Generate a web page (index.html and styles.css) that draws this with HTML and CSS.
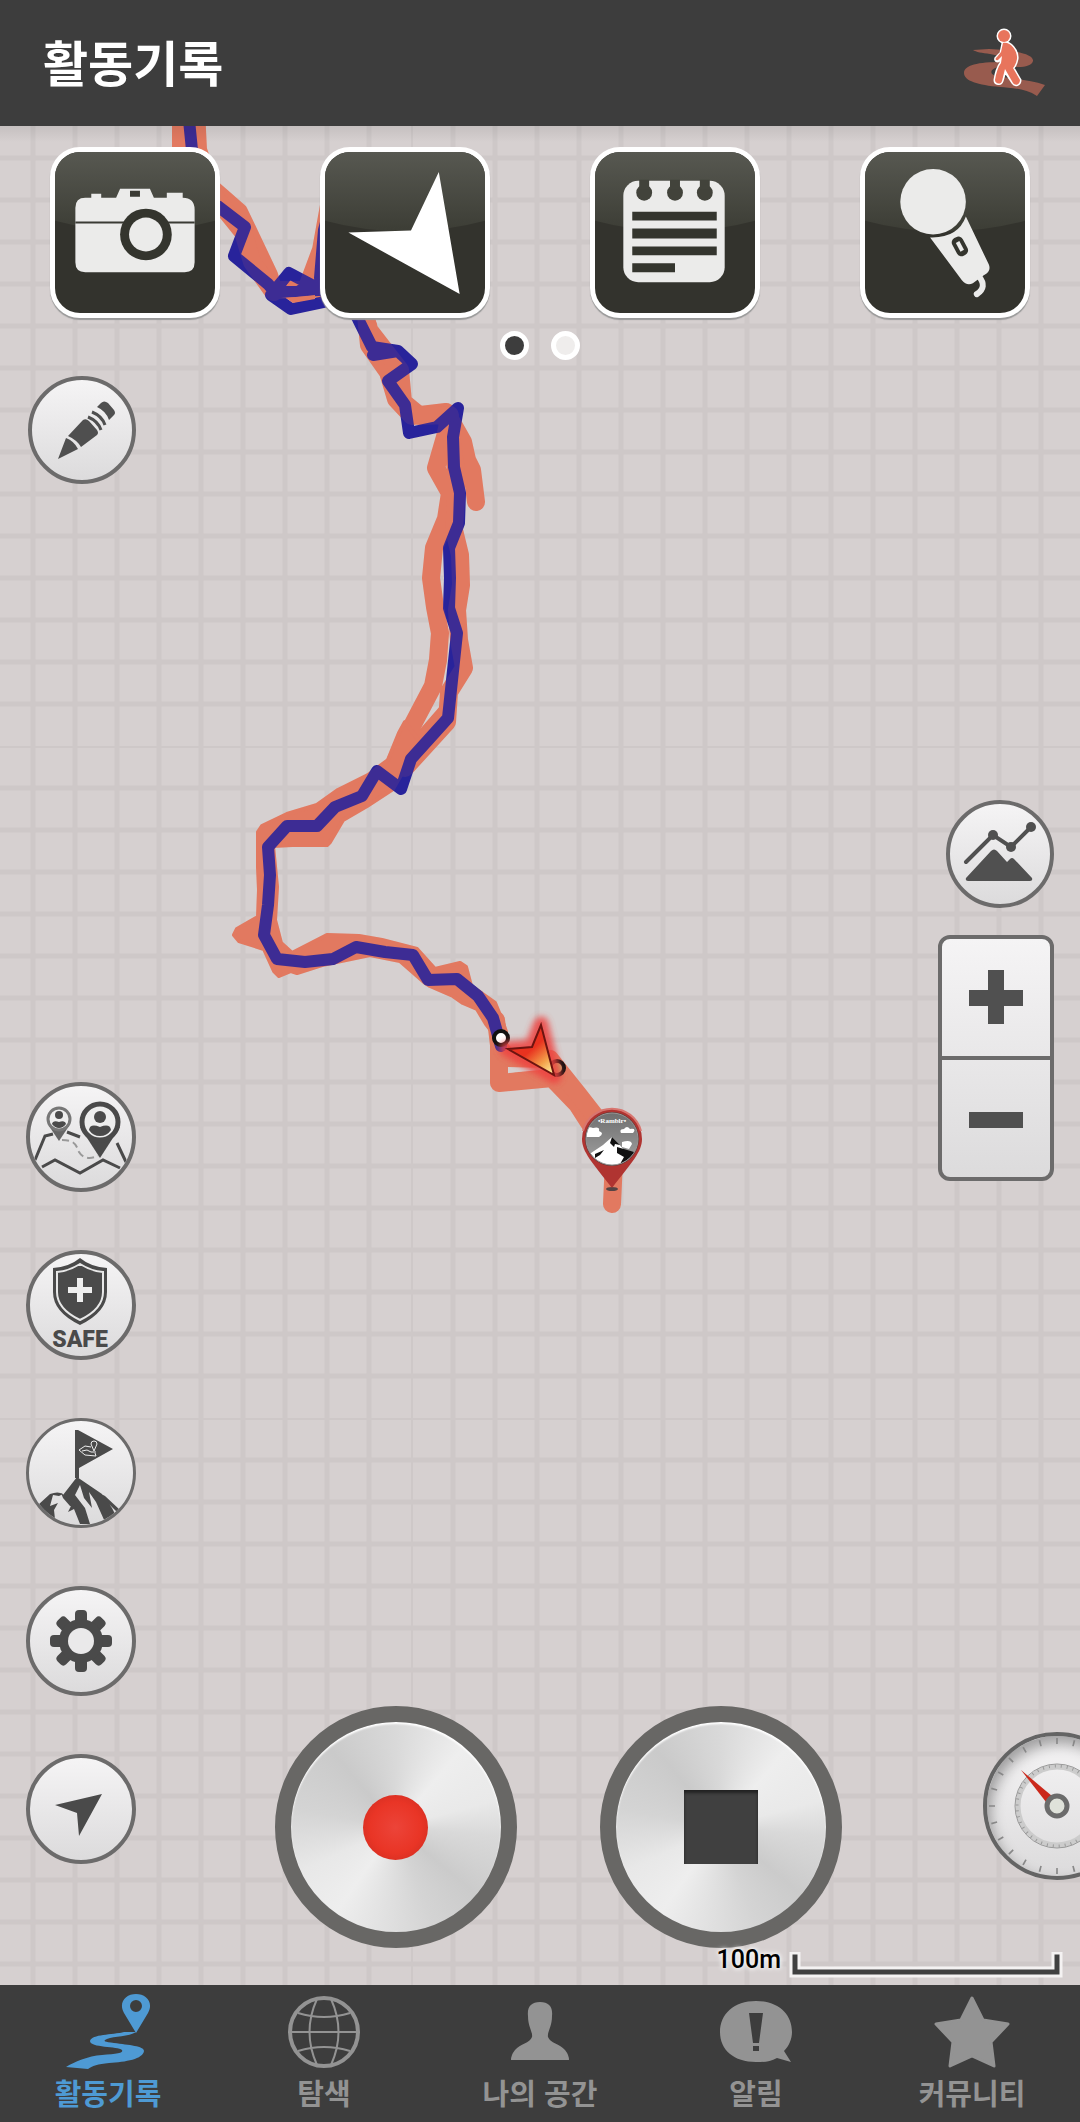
FILE: index.html
```html
<!DOCTYPE html>
<html lang="ko">
<head>
<meta charset="utf-8">
<meta name="viewport" content="width=device-width, initial-scale=1">
<title>활동기록</title>
<link rel="stylesheet" href="styles.css">
</head>
<body>
<header class="topbar">
  <h1 class="topbar-title">활동기록</h1>
  <button class="activity" type="button" aria-label="걷기">
    <svg width="90" height="80" viewBox="0 0 90 80" fill="none" stroke-linecap="round" stroke-linejoin="round">
      <path fill="#985b4e" d="M13 27L29 26C55 27 74 31 73 38C72 42 66 44 58 44L38 44C30 46 29 51 36 53C55 56 70 57 85 62L77 73C65 65 50 65 40 64C18 62 4 58 4 50C4 42 18 39 42 39C52 37 45 34 30 31C22 30 16 29 13 27Z"/>
      <g stroke="#fff" fill="#fff">
        <circle cx="44" cy="13" r="6" stroke-width="3"/>
        <path stroke-width="3" d="M43 20C50 18 58 28 57 36C56 41 54 44 53 45L60 57C60 62 55 63 53 60L45 48L42 58C41 62 35 61 35 57C36 50 38 44 41 40L42 34L38 38C35 38 35 35 37 34L41 30Z"/>
      </g>
      <g fill="#e8745c">
        <circle cx="44" cy="13" r="6"/>
        <path d="M43 20C50 18 58 28 57 36C56 41 54 44 53 45L60 57C60 62 55 63 53 60L45 46L42 58C41 62 35 61 35 57C36 50 38 44 41 40L42 33L38 37C35 38 35 35 37 34L41 29Z"/>
      </g>
    </svg>
  </button>
</header>

<main class="map">
  <svg class="map-canvas" aria-hidden="true">
    <defs>
      <pattern id="grid" width="672" height="672" x="411" y="620" patternUnits="userSpaceOnUse">
        <path stroke="#cec8c8" stroke-width="5" d="M42 0v672M84 0v672M126 0v672M168 0v672M210 0v672M252 0v672M294 0v672M336 0v672M378 0v672M420 0v672M462 0v672M504 0v672M546 0v672M588 0v672M630 0v672M0 42h672M0 84h672M0 126h672M0 168h672M0 210h672M0 252h672M0 294h672M0 336h672M0 378h672M0 420h672M0 462h672M0 504h672M0 546h672M0 588h672M0 630h672"/>
        <path stroke="#cec8c8" stroke-width="2" d="M1 0v672M0 1h672"/>
      </pattern>
      <linearGradient id="heading" x1="0.3" y1="0.2" x2="0.95" y2="1">
        <stop offset="0.35" stop-color="#e8321f"/><stop offset="0.7" stop-color="#f4a04a"/><stop offset="1" stop-color="#fff3a0"/>
      </linearGradient>
      <linearGradient id="sky" x1="0" y1="0" x2="0" y2="1">
        <stop offset="0" stop-color="#6f6f6f"/><stop offset="1" stop-color="#a2a2a2"/>
      </linearGradient>
      <clipPath id="pin-face"><circle cx="612" cy="1139" r="26"/></clipPath>
      <filter id="glow" x="-50%" y="-50%" width="200%" height="200%"><feGaussianBlur stdDeviation="3"/></filter>
      <g id="trail" fill="none" stroke="#e27960" stroke-width="18" stroke-linejoin="round" stroke-linecap="round">
        <path d="M181 110V150L200 178L222 197L239 212L269 275L274 292"/>
        <path d="M196 110L198 150L214 196L243 232L252 262L272 290L300 290"/>
        <path d="M330 200L321 250L308 285L335 295L366 315L369 345L388 372L396 399L412 416L446 412L463 442L467 460L472 470L476 502"/>
        <path d="M368 325L369 330L400 370L403 402L420 416L450 415L445 437L436 468L450 493L446 519L434 548L431 578L435 607L440 633L438 660L433 686L412 726L395 762"/>
        <path d="M450 430L456 470L456 500L454 530L460 555L461 585L457 610L459 640L464 668L449 692L447 722L405 768"/>
        <path d="M398 762L445 708" stroke-width="10"/>
        <path fill="#e27960" stroke-width="4" d="M405 722L399 733L388 760L368 775L338 790L317 805L287 814L262 826L258 832V867L259 890L258 917L237 929L234 935L239 941L264 949L274 971L279 976L291 971L297 973L322 965L370 955L400 961L424 982L430 986L453 996L463 1003L477 1009L486 1024L500 1042L506 1032L502 1020L495 1003L471 986L466 967L460 963L435 969L417 949L382 940L359 936L327 935L292 953L281 943L275 920L277 887L273 846L292 845H327L330 842L343 820L367 806L393 789L420 742Z"/>
        <path d="M496 1020L499 1045V1083L552 1078L577 1104L604 1146L614 1160L612 1204"/>
        <path d="M500 1048L508 1058L550 1059L578 1094L606 1130"/>
      </g>
    </defs>
    <rect width="100%" height="100%" fill="url(#grid)"/>
    <g transform="translate(0 -126)">
      <use href="#trail"/>
      <path fill="none" stroke="#28239b" stroke-width="12" stroke-linejoin="round" stroke-linecap="round" d="M188 110L192 150L215 204L245 227L234 256L268 284L275 292L318 290M324 302L291 309L271 295L289 273L325 292M332 200L324 230L320 278M340 286L358 319L372 347L398 351L412 364L388 381L405 405L409 433L437 427L458 408L453 437L454 467L460 493L459 523L449 548L450 578L449 608L457 633L448 718L411 759L401 789L377 771L362 796L335 807L317 826H287L268 847L270 875L268 905L264 935L277 959L305 962L333 959L356 947L385 952L413 955L428 980L457 979L478 996L493 1018L501 1046M373 355L398 351"/>
      <path fill="#e27960" d="M286 286L290 281L298 286ZM286 298L315 295V299L293 303Z"/>
      <use href="#trail" opacity="0.11"/>
      <path d="M508 1070L530 1068V1070L508 1073Z" fill="#d6d0d0"/>
      <circle cx="501" cy="1038" r="7" fill="#fff" stroke="#111" stroke-width="4"/>
      <circle cx="557" cy="1068" r="7" fill="#c9a56b" stroke="#111" stroke-width="4"/>
      <path d="M541 1024L554 1076L507 1049L532 1047Z" fill="#ee4340" stroke="#ee4340" stroke-width="15" stroke-linejoin="round" opacity="0.85" filter="url(#glow)"/>
      <path d="M541 1025L554 1075L508 1049L532 1047Z" fill="url(#heading)" stroke="#6d1410" stroke-width="2"/>
      <ellipse cx="612" cy="1189" rx="6" ry="2" fill="#544"/>
      <path d="M582 1139A30 30 0 0 1 642 1139C642 1152 632 1162 612 1188C592 1162 582 1152 582 1139Z" fill="#b03431"/>
      <path d="M583 1131A30 30 0 0 1 641 1131" fill="none" stroke="#d87670" stroke-width="2"/>
      <circle cx="612" cy="1139" r="27" fill="#5a3836"/>
      <g clip-path="url(#pin-face)">
        <circle cx="612" cy="1139" r="26" fill="url(#sky)"/>
        <path fill="#fff" d="M584 1137V1130Q588 1126 593 1128Q600 1126 599 1131Q605 1133 599 1137ZM621 1133Q619 1129 624 1129Q627 1125 630 1129Q637 1128 633 1133ZM622 1147V1142Q631 1139 632 1144L629 1149ZM588 1155L603 1145L612 1137L618 1143L638 1166H588Z"/>
        <path fill="#111" d="M612 1137L620 1145L615 1144L614 1147L610 1143ZM617 1147L634 1152L636 1158L620 1164L624 1157L617 1153ZM595 1154L604 1150L600 1155L595 1158Z"/>
      </g>
      <circle cx="612" cy="1139" r="26" fill="none" stroke="#999" stroke-width="1"/>
      <text class="pin-label" x="612" y="1123" text-anchor="middle">•Ramblr•</text>
    </g>
  </svg>

  <div class="shortcuts">
    <button class="tile" type="button" aria-label="사진">
      <svg viewBox="5 5 160 162" fill="#ebebea">
        <defs><linearGradient id="gloss" x1="0" y1="0" x2="0" y2="1"><stop offset="0" stop-color="#595a53"/><stop offset="1" stop-color="#3c3d35"/></linearGradient></defs>
        <path id="shine" fill="url(#gloss)" d="M0 0H170V73Q85 97 0 73Z"/>
        <path d="M35 51H41V47H51V51H66L70 42H100L104 51H117V46H133V51Q145 51 145 63V116Q145 126 135 126H35Q25 126 25 116V61Q25 51 35 51Z"/>
        <path fill="#3a3b34" d="M80 44h10v6h-10zM25 75h120v2h-120z"/>
        <circle cx="96" cy="88" r="26" fill="#34352e"/><circle cx="96" cy="88" r="17"/>
      </svg>
    </button>
    <button class="tile" type="button" aria-label="방향">
      <svg viewBox="5 5 160 162"><use href="#shine"/><path fill="#fff" d="M119 25L140 148L28 86L91 84Z"/></svg>
    </button>
    <button class="tile" type="button" aria-label="메모">
      <svg viewBox="5 5 160 162" fill="#ebebea"><use href="#shine"/>
        <rect x="33" y="34" width="102" height="102" rx="15"/>
        <g fill="#42433b"><circle cx="54" cy="46" r="8"/><circle cx="85" cy="46" r="8"/><circle cx="115" cy="46" r="8"/><path d="M49 33h10v10h-10zM80 33h10v10h-10zM110 33h10v10h-10z"/></g>
        <path fill="#34352e" d="M42 65h85v9h-85zM42 82h85v10h-85zM42 100h85v9h-85zM42 117h43v9h-43z"/>
      </svg>
    </button>
    <button class="tile" type="button" aria-label="음성">
      <svg viewBox="5 5 160 162" fill="#ebebea"><use href="#shine"/>
        <circle cx="73" cy="55" r="33"/>
        <path d="M70 91Q98 92 106 70L129 118Q132 125 124 129L113 137Q107 140 102 134Z"/>
        <path d="M119 130Q128 141 117 148" fill="none" stroke="#ebebea" stroke-width="6" stroke-linecap="round"/>
        <g transform="rotate(-28 100 100)"><rect x="94" y="90" width="12" height="20" rx="5" fill="#34352e"/><rect x="98" y="95" width="4" height="10"/></g>
      </svg>
    </button>
  </div>

  <div class="pager">
    <button class="dot dot-on" type="button" aria-label="1 페이지"></button>
    <button class="dot" type="button" aria-label="2 페이지"></button>
  </div>

  <div class="controls">
    <div class="side-left">
      <button class="round small" type="button" aria-label="그리기">
        <svg viewBox="4 4 100 100" fill="#4f4f4f">
          <path d="M30 83L38 62Q46 65 50 73ZM40 60L55 44Q58 42 61 45L69 54Q71 57 69 59L53 71Q49 64 40 60Z"/>
          <path d="M69 31L73 27Q76 24 80 27L86 34Q88 37 86 39L81 44Q78 35 69 31Z"/>
          <path d="M60 41Q70 45 73 54M64 36Q74 40 77 49" fill="none" stroke="#4f4f4f" stroke-width="3"/>
        </svg>
      </button>
      <div class="stack">
        <button class="round" type="button" aria-label="동반자 지도">
          <svg viewBox="4 4 102 102" fill="none" stroke="#4a4a4a" stroke-width="3">
            <path d="M9 78L19 54L27 52M41 50L54 55M91 61L100 80M16 85L29 78L54 91L77 78L94 86"/>
            <path stroke="#999" stroke-width="2" stroke-dasharray="7 4" d="M36 58C49 58 50 63 53 70C57 77 65 77 72 74"/>
            <path fill="#666" stroke="none" d="M23 44H43L33 59Z"/><circle cx="33" cy="37" r="11" fill="#eee" stroke="#777"/>
            <path fill="#4a4a4a" stroke="none" d="M54 45H94L74 76Z"/><circle cx="74" cy="40" r="18" fill="#eee" stroke-width="5"/>
            <g fill="#4a4a4a" stroke="none"><circle cx="33" cy="33" r="4"/><path d="M26 42Q27 38 33 40Q39 38 40 42Q37 46 33 46Q29 46 26 42Z"/><circle cx="74" cy="35" r="6"/><path d="M63 48Q64 41 74 45Q84 41 85 48Q81 54 74 54Q67 54 63 48Z"/></g>
          </svg>
        </button>
        <button class="round" type="button" aria-label="SAFE">
          <svg viewBox="4 4 102 102" fill="#4a4a4a">
            <path d="M54 8Q65 17 81 18V42Q81 62 54 75Q27 62 27 42V18Q43 17 54 8Z"/>
            <path fill="none" stroke="#e8e8e8" stroke-width="2" d="M54 14Q65 21 77 22V42Q77 59 54 70Q31 59 31 42V22Q43 21 54 14Z"/>
            <path fill="#eee" d="M51 28h6v9h9v6h-9v9h-6v-9h-9v-6h9z"/>
            <text class="safe-label" x="54" y="97" text-anchor="middle">SAFE</text>
          </svg>
        </button>
        <button class="round thin" type="button" aria-label="정상 도전">
          <svg viewBox="3 3 104 104" fill="#4a4a4a">
            <path d="M49 12H52L87 31L53 50V60H49Z"/>
            <path fill="none" stroke="#eee" stroke-width="1" d="M65 29L59 28L53 32L59 37L70 38L69 35M56 33L61 32L65 34L70 34M65 26A3 3 0 1 1 71 26L68 33Z"/>
            <path d="M51 59L76 76L86 90L90 98Q84 102 79 104L70 84L63 74L66 90L58 80L54 67L49 77L59 90L64 106H54L48 91L42 94L46 86L37 77ZM12 87L24 76Q32 73 37 76L33 78L27 77L24 88L32 85L28 92L29 101Q18 96 12 87ZM73 78Q75 75 79 78L94 92L92 95L80 83L90 98L80 90Z"/>
            <path d="M35 75L43 81L51 90L44 88L37 80Z"/>
          </svg>
        </button>
        <button class="round" type="button" aria-label="설정">
          <svg viewBox="4 4 102 102" fill="#4a4a4a">
            <g id="teeth"><rect x="49" y="24" width="12" height="62" rx="4"/><rect x="24" y="49" width="62" height="12" rx="4"/></g>
            <use href="#teeth" transform="rotate(45 55 55)"/>
            <circle cx="55" cy="55" r="22"/><circle cx="55" cy="55" r="13" fill="#eae9ea"/>
          </svg>
        </button>
        <button class="round" type="button" aria-label="현재 위치">
          <svg viewBox="4 4 102 102"><path fill="#4a4a4a" d="M76 40L53 82L51 59L29 51Z"/></svg>
        </button>
      </div>
    </div>

    <div class="recorder">
      <button class="knob" type="button" aria-label="기록"><span class="rec"></span></button>
      <button class="knob" type="button" aria-label="정지"><span class="stop"></span></button>
    </div>

    <div class="side-right">
      <div class="view-tools">
        <button class="round small" type="button" aria-label="고도 그래프">
          <svg viewBox="4 4 100 100" fill="#505050">
            <path d="M20 62L47 35L65 47L85 27" fill="none" stroke="#505050" stroke-width="4" stroke-linecap="round"/>
            <circle cx="47" cy="35" r="5"/><circle cx="65" cy="47" r="5"/><circle cx="85" cy="27" r="5"/>
            <path d="M20 78L45 51Q48 48 51 51L61 62L64 59Q66 57 68 59L86 78Q87 81 84 81H22Q19 81 20 78Z"/>
          </svg>
        </button>
        <div class="zoom">
          <button type="button" aria-label="확대"><svg width="56" height="56" viewBox="0 0 56 56"><path fill="#505050" d="M20 1h16v20h19v16H36v18H20V37H1V21h19z"/></svg></button>
          <button type="button" aria-label="축소"><svg width="56" height="56" viewBox="0 0 56 56"><path fill="#505050" d="M1 22h54v16H1z"/></svg></button>
        </div>
      </div>
      <button class="gauge" type="button" aria-label="계기판">
        <svg viewBox="4 4 140 140" fill="none">
          <circle cx="74" cy="74" r="39" stroke="#ccc" stroke-width="5"/>
          <circle cx="74" cy="74" r="42" stroke="#999" stroke-width="1"/>
          <circle cx="74" cy="74" r="40" stroke="#999" stroke-width="3" stroke-dasharray="1 5"/>
          <circle cx="74" cy="74" r="65" stroke="#888" stroke-width="6" pathLength="240" stroke-dasharray="1 9" stroke-dashoffset="0.5"/>
          <path fill="#cb281b" d="M38 38L69 64L63 70Z"/>
          <circle cx="74" cy="74" r="10" fill="#dfe2da" stroke="#6b6b6b" stroke-width="5"/>
        </svg>
      </button>
    </div>
  </div>

  <div class="scale">
    <span class="scale-text">100m</span>
    <svg width="274" height="26" viewBox="0 0 274 26" fill="none"><path d="M6 5V20H268V5" stroke="#f4f2f2" stroke-width="11" stroke-linecap="square"/><path d="M6 5V20H268V5" stroke="#404040" stroke-width="5" stroke-linecap="square"/></svg>
  </div>
</main>

<nav class="tabs">
  <a class="tab active" href="#record" aria-current="page">
    <svg viewBox="0 0 88 80" fill="currentColor"><path fill-rule="evenodd" d="M72 42L60 22C54 11 62 3 72 3C82 3 90 11 84 22ZM72 9A6 6 0 1 0 72 21A6 6 0 1 0 72 9Z"/><path d="M72 41C65 46 50 45 43 48C38 50 41 51 50 52C65 54 80 55 80 60C79 68 62 71 45 72C34 73 28 75 24 78L2 76C10 71 24 65 38 64C52 63 60 62 58 59C54 55 26 57 26 50C28 43 48 44 60 41Z"/></svg>
    <span>활동기록</span>
  </a>
  <a class="tab" href="#explore">
    <svg viewBox="0 0 88 80" fill="none" stroke="currentColor" stroke-width="2"><circle cx="44" cy="41" r="34" stroke-width="4"/><path d="M10 41H78M18 22Q44 30 70 22M18 60Q44 52 70 60M37 8Q22 41 37 74M51 8Q66 41 51 74"/></svg>
    <span>탐색</span>
  </a>
  <a class="tab" href="#my">
    <svg viewBox="0 0 88 80" fill="currentColor"><path d="M44 11C53 11 57 16 56 25C56 36 51 41 52 46C54 52 64 53 69 59Q73 64 73 69H15Q15 64 19 59C24 53 34 52 36 46C37 41 32 36 32 25C31 16 35 11 44 11Z"/></svg>
    <span>나의 공간</span>
  </a>
  <a class="tab" href="#alerts">
    <svg viewBox="0 0 88 80" fill="currentColor"><path fill-rule="evenodd" d="M44 10C66 10 80 23 80 41C80 48 77 55 72 60L79 71L65 67C58 71 52 71 44 71C22 71 8 59 8 41C8 23 22 10 44 10ZM37 22L41 52H47L51 22ZM41 55V60H47V55Z"/></svg>
    <span>알림</span>
  </a>
  <a class="tab" href="#community">
    <svg viewBox="0 0 88 80" fill="currentColor" stroke="currentColor" stroke-width="3" stroke-linejoin="round"><path d="M44 7L55 29L80 33L63 51L66 75L44 65L22 75L25 51L8 33L33 29Z"/></svg>
    <span>커뮤니티</span>
  </a>
</nav>
</body>
</html>
```
FILE: styles.css
```css
* {
  box-sizing: border-box;
}

body {
  margin: 0;
  min-height: 100vh;
  display: flex;
  flex-direction: column;
  background: #3d3d3d;
  font-family: "Noto Sans CJK KR", sans-serif;
}

button {
  margin: 0;
  padding: 0;
  border: 0;
  background: none;
  font: inherit;
  cursor: pointer;
}

svg {
  display: block;
}

.topbar {
  height: 126px;
  padding: 0 30px 0 43px;
  display: flex;
  align-items: center;
  justify-content: space-between;
  background: #3d3d3d;
}

.topbar-title {
  margin: 0;
  padding-bottom: 4px;
  font-size: 49px;
  line-height: 72px;
  font-weight: 700;
  color: #fff;
}

.map {
  position: relative;
  flex: 1;
  display: flex;
  flex-direction: column;
  overflow: hidden;
  background: #d6d0d0;
}

.map::after {
  content: "";
  position: absolute;
  inset: 0 0 auto;
  height: 16px;
  background: linear-gradient(rgba(0, 0, 0, 0.08), transparent);
  pointer-events: none;
}

.map-canvas {
  position: absolute;
  inset: 0;
  width: 100%;
  height: 100%;
}

.pin-label {
  font: 700 7px "Liberation Serif", serif;
  fill: #fff;
}

.shortcuts {
  position: relative;
  display: grid;
  grid-template-columns: repeat(4, 1fr);
  justify-items: center;
  padding-top: 21px;
}

.tile {
  width: 170px;
  height: 171px;
  border: 5px solid #fff;
  border-radius: 30px;
  overflow: hidden;
  background: #33332d;
  box-shadow: 0 2px 1px #999;
}

.tile svg,
.round svg,
.gauge svg {
  width: 100%;
  height: 100%;
}

.pager {
  position: relative;
  display: flex;
  justify-content: center;
  gap: 22px;
  margin-top: 13px;
}

.dot {
  width: 29px;
  height: 29px;
  border: 5px solid #fff;
  border-radius: 50%;
  background: #efedec;
}

.dot-on {
  background: #3d3d3d;
}

.controls {
  position: relative;
  flex: 1;
  display: grid;
  grid-template-columns: 1fr auto 1fr;
  margin-top: 16px;
}

.side-left {
  display: flex;
  flex-direction: column;
  justify-content: space-between;
  gap: 58px;
  width: 136px;
  padding: 0 0 84px 26px;
}

.side-left > .small {
  align-self: flex-end;
}

.stack {
  display: flex;
  flex-direction: column;
  gap: 58px;
}

.round {
  width: 110px;
  height: 110px;
  border: 4px solid #6c6b6b;
  border-radius: 50%;
  overflow: hidden;
  background: linear-gradient(#f5f4f5, #dcdbdc);
}

.small {
  width: 108px;
  height: 108px;
}

.thin {
  border-width: 3px;
}

.safe-label {
  font: 900 23px Roboto, sans-serif;
}

.recorder {
  display: flex;
  align-self: end;
  gap: 83px;
  padding-left: 36px;
}

.knob {
  display: grid;
  place-items: center;
  width: 242px;
  height: 242px;
  border: 16px solid #686765;
  border-radius: 50%;
  background: conic-gradient(#d9d9d9, #eee 40deg, #e9e9e9 75deg, #d9d9d9 95deg, #cbcbcb 130deg, #d4d4d4 160deg, #eee 215deg, #e8e8e8 245deg, #d4d4d4 280deg, #cacaca 320deg, #d9d9d9);
  box-shadow: inset 0 2px 2px #fff;
}

.rec {
  width: 65px;
  height: 65px;
  border-radius: 50%;
  background: radial-gradient(#ec4439, #e93526 55%, #c82a1f);
}

.stop {
  width: 74px;
  height: 74px;
  background: #404040;
  box-shadow: inset 0 3px 3px #222;
}

.side-right {
  display: grid;
  grid-template-rows: 10fr auto 13fr auto;
  justify-items: end;
  padding: 0 26px 68px 0;
}

.view-tools {
  grid-row: 2;
  display: flex;
  flex-direction: column;
  align-items: flex-end;
  gap: 27px;
}

.zoom {
  display: flex;
  flex-direction: column;
  width: 116px;
  height: 246px;
  border: 4px solid #6c6b6b;
  border-radius: 12px;
  background: linear-gradient(#f5f4f5, #dcdbdc);
}

.zoom button {
  flex: 1;
  display: grid;
  place-items: center;
}

.zoom button + button {
  border-top: 4px solid #6c6b6b;
}

.gauge {
  grid-row: 4;
  width: 148px;
  height: 148px;
  margin-right: -77px;
  border: 4px solid #646464;
  border-radius: 50%;
  background: linear-gradient(#f5f4f5, #dcdbdc);
  box-shadow: inset 3px 8px 14px rgba(0, 0, 0, 0.35);
}

.scale {
  position: relative;
  display: flex;
  justify-content: flex-end;
  align-items: flex-start;
  gap: 8px;
  height: 37px;
  padding-right: 17px;
}

.scale svg {
  margin-top: 4px;
}

.scale-text {
  font: 500 25px/24px Roboto, sans-serif;
  color: #000;
  text-shadow: 0 0 4px #fff, 0 0 6px #fff;
}

.tabs {
  display: grid;
  grid-template-columns: repeat(5, 1fr);
  height: 137px;
  padding-top: 6px;
  background: #3d3d3d;
}

.tab {
  display: flex;
  flex-direction: column;
  align-items: center;
  gap: 3px;
  color: #939393;
  font-size: 29px;
  line-height: 36px;
  font-weight: 700;
  text-decoration: none;
}

.tab svg {
  width: 88px;
  height: 80px;
}

.active {
  color: #4e9ad4;
}
```
